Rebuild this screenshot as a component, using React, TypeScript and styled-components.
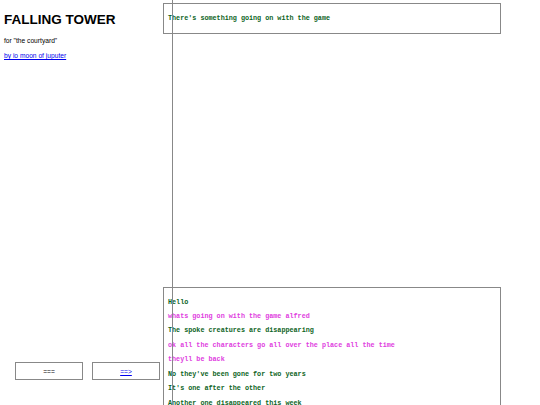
import React from "react";
import styled, { createGlobalStyle } from "styled-components";

const Global = createGlobalStyle`
  html, body { margin: 0; padding: 0; background: #fff; }
  body { font-family: "Liberation Sans", Arial, sans-serif; overflow: hidden; }
`;

const Page = styled.div`
  position: relative;
  display: flex;
  width: 540px;
  height: 405px;
  overflow: hidden;
`;

const Sidebar = styled.div`
  width: 163px;
  flex: none;
  display: flex;
  flex-direction: column;
  padding: 0 0 0 4px;
  box-sizing: border-box;
`;

const Title = styled.h1`
  margin: 12px 0 0;
  font-size: 13.5px;
  line-height: 16px;
  font-weight: bold;
  color: #000;
`;

const Subtitle = styled.p`
  margin: 9px 0 0;
  font-size: 6.67px;
  line-height: 8px;
  color: #000;
`;

const Byline = styled.a`
  display: block;
  margin-top: 7px;
  font-size: 6.67px;
  line-height: 8px;
  color: #00e;
  text-decoration: underline;
`;

const Controls = styled.div`
  margin-top: auto;
  margin-bottom: 25px;
  margin-left: 11px;
  display: flex;
  gap: 9px;
`;

const NavButton = styled.div`
  width: 68px;
  height: 18px;
  box-sizing: border-box;
  border: 1px solid #888;
  display: flex;
  align-items: center;
  justify-content: center;
  font-family: "Liberation Sans", Arial, sans-serif;
  font-size: 6.67px;
  color: #000;
`;

const NavLink = styled.a`
  color: #00e;
  text-decoration: underline;
`;

const Stage = styled.div`
  width: 338px;
  flex: none;
  display: flex;
  flex-direction: column;
`;

const Prompt = styled.div`
  margin-top: 3px;
  height: 31px;
  box-sizing: border-box;
  border: 1px solid #888;
  padding: 0 4px;
  display: flex;
  align-items: center;
`;

const Log = styled.div`
  margin-top: auto;
  height: 118px;
  flex: none;
  box-sizing: border-box;
  border: 1px solid #888;
  border-bottom: none;
  padding: 4px 4px 0;
`;

const Line = styled.p<{ $who: "npc" | "me" }>`
  margin: 6.67px 0;
  font-family: "Liberation Mono", "Courier New", monospace;
  font-weight: bold;
  font-size: 6.75px;
  line-height: 7.75px;
  white-space: pre;
  color: ${(p) => (p.$who === "npc" ? "#0d6324" : "#e040e0")};
`;

const Rule = styled.div`
  position: absolute;
  left: 172px;
  top: 0;
  width: 1px;
  height: 100%;
  background: #888;
`;

const lines: { who: "npc" | "me"; text: string }[] = [
  { who: "npc", text: "Hello" },
  { who: "me", text: "whats going on with the game alfred" },
  { who: "npc", text: "The spoke creatures are disappearing" },
  { who: "me", text: "ok all the characters go all over the place all the time" },
  { who: "me", text: "theyll be back" },
  { who: "npc", text: "No they've been gone for two years" },
  { who: "npc", text: "It's one after the other" },
  { who: "npc", text: "Another one disappeared this week" },
];

export default function App() {
  return (
    <>
      <Global />
      <Page>
        <Sidebar>
          <Title>FALLING TOWER</Title>
          <Subtitle>for "the courtyard"</Subtitle>
          <Byline href="#">by io moon of juputer</Byline>
          <Controls>
            <NavButton>===</NavButton>
            <NavButton>
              <NavLink href="#">==&gt;</NavLink>
            </NavButton>
          </Controls>
        </Sidebar>
        <Stage>
          <Prompt>
            <Line $who="npc" style={{ margin: 0 }}>
              There's something going on with the game
            </Line>
          </Prompt>
          <Log>
            {lines.map((l, i) => (
              <Line key={i} $who={l.who}>
                {l.text}
              </Line>
            ))}
          </Log>
        </Stage>
        <Rule />
      </Page>
    </>
  );
}
